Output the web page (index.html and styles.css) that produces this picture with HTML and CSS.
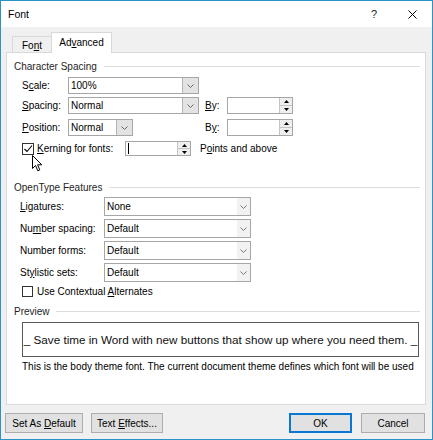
FILE: index.html
```html
<!DOCTYPE html>
<html>
<head>
<meta charset="utf-8">
<title>Font</title>
<link rel="stylesheet" href="styles.css">
</head>
<body>
<div class="win">
  <div class="titlebar">
    <span class="title">Font</span>
    <span class="help">?</span>
    <span class="close"><svg width="9" height="9" viewBox="0 0 9 9"><path d="M0.5 0.5L8.5 8.5M8.5 0.5L0.5 8.5" stroke="#000" stroke-width="1" fill="none"/></svg></span>
  </div>
  <div class="client">
    <div class="tabs">
      <div class="tab tab-font"><span>Fo<u>n</u>t</span></div>
      <div class="tab tab-active"><span>Ad<u>v</u>anced</span></div>
    </div>
    <div class="panel">
      <div class="ghead g-char"><span>Character Spacing</span><span class="rule"></span></div>

      <div class="row r-scale">
        <span class="lbl lw46">S<u>c</u>ale:</span>
        <div class="combo cw131"><span class="val">100%</span><span class="arr dark"><svg width="7" height="4" viewBox="0 0 7 4"><path d="M0.5 0.5L3.5 3.5L6.5 0.5" stroke="#666" fill="none"/></svg></span></div>
      </div>

      <div class="row r-spacing">
        <span class="lbl lw46"><u>S</u>pacing:</span>
        <div class="combo cw131"><span class="val">Normal</span><span class="arr dark"><svg width="7" height="4" viewBox="0 0 7 4"><path d="M0.5 0.5L3.5 3.5L6.5 0.5" stroke="#666" fill="none"/></svg></span></div>
        <span class="lbl by"><u>B</u>y:</span>
        <div class="spin sw66"><span class="field"></span><span class="btns"><span class="up"><svg width="5" height="3" viewBox="0 0 5 3"><path d="M0 3L2.5 0L5 3Z" fill="#000"/></svg></span><span class="dn"><svg width="5" height="3" viewBox="0 0 5 3"><path d="M0 0L2.5 3L5 0Z" fill="#000"/></svg></span></span></div>
      </div>

      <div class="row r-position">
        <span class="lbl lw46"><u>P</u>osition:</span>
        <div class="cell131"><div class="combo cw65"><span class="val">Normal</span><span class="arr dark"><svg width="7" height="4" viewBox="0 0 7 4"><path d="M0.5 0.5L3.5 3.5L6.5 0.5" stroke="#666" fill="none"/></svg></span></div></div>
        <span class="lbl by">B<u>y</u>:</span>
        <div class="spin sw66"><span class="field"></span><span class="btns"><span class="up"><svg width="5" height="3" viewBox="0 0 5 3"><path d="M0 3L2.5 0L5 3Z" fill="#000"/></svg></span><span class="dn"><svg width="5" height="3" viewBox="0 0 5 3"><path d="M0 0L2.5 3L5 0Z" fill="#000"/></svg></span></span></div>
      </div>

      <div class="row r-kern">
        <span class="chk"><svg width="10" height="10" viewBox="0 0 10 10"><path d="M1.5 5L4 7.5L9 1.5" stroke="#000" stroke-width="1.1" fill="none"/></svg></span>
        <span class="lbl kern-lbl"><u>K</u>erning for fonts:</span>
        <div class="spin sw66"><span class="field"><span class="caret"></span></span><span class="btns"><span class="up"><svg width="5" height="3" viewBox="0 0 5 3"><path d="M0 3L2.5 0L5 3Z" fill="#000"/></svg></span><span class="dn"><svg width="5" height="3" viewBox="0 0 5 3"><path d="M0 0L2.5 3L5 0Z" fill="#000"/></svg></span></span></div>
        <span class="lbl pts">P<u>o</u>ints and above</span>
      </div>

      <div class="ghead g-ot"><span>OpenType Features</span><span class="rule"></span></div>

      <div class="row orow o1">
        <span class="lbl lw84"><u>L</u>igatures:</span>
        <div class="combo cw147"><span class="val">None</span><span class="arr light"><svg width="7" height="4" viewBox="0 0 7 4"><path d="M0.5 0.5L3.5 3.5L6.5 0.5" stroke="#777" fill="none"/></svg></span></div>
      </div>
      <div class="row orow">
        <span class="lbl lw84">Nu<u>m</u>ber spacing:</span>
        <div class="combo cw147"><span class="val">Default</span><span class="arr light"><svg width="7" height="4" viewBox="0 0 7 4"><path d="M0.5 0.5L3.5 3.5L6.5 0.5" stroke="#777" fill="none"/></svg></span></div>
      </div>
      <div class="row orow">
        <span class="lbl lw84">Number forms:</span>
        <div class="combo cw147"><span class="val">Default</span><span class="arr light"><svg width="7" height="4" viewBox="0 0 7 4"><path d="M0.5 0.5L3.5 3.5L6.5 0.5" stroke="#777" fill="none"/></svg></span></div>
      </div>
      <div class="row orow">
        <span class="lbl lw84">St<u>y</u>listic sets:</span>
        <div class="combo cw147"><span class="val">Default</span><span class="arr light"><svg width="7" height="4" viewBox="0 0 7 4"><path d="M0.5 0.5L3.5 3.5L6.5 0.5" stroke="#777" fill="none"/></svg></span></div>
      </div>

      <div class="row r-ctx">
        <span class="chk small"></span>
        <span class="lbl">Use Contextual <u>A</u>lternates</span>
      </div>

      <div class="ghead g-prev"><span>Preview</span><span class="rule"></span></div>

      <div class="preview"><span>_ Save time in Word with new buttons that show up where you need them. _</span></div>
      <div class="desc">This is the body theme font. The current document theme defines which font will be used</div>

      <svg class="cursor" width="11" height="17" viewBox="0 0 11 17"><path d="M0.5 0.5L0.5 13.5L3.5 10.5L5.8 15.8L7.8 14.9L5.6 9.8L9.8 9.8Z" fill="#fff" stroke="#000" stroke-width="1" stroke-linejoin="miter"/></svg>
    </div>
    <div class="buttons">
      <div class="btn b-def"><span>Set As <u>D</u>efault</span></div>
      <div class="btn b-fx"><span>Text <u>E</u>ffects...</span></div>
      <div class="btn b-ok"><span>OK</span></div>
      <div class="btn b-cancel"><span>Cancel</span></div>
    </div>
  </div>
</div>
</body>
</html>
```

FILE: styles.css
```css
* { box-sizing: border-box; }
html, body { margin: 0; padding: 0; }
body {
  width: 433px;
  height: 440px;
  overflow: hidden;
  font-family: "Liberation Sans", Arial, sans-serif;
  font-size: 10px;
  color: #000;
  background: #fff;
}
u { text-decoration-thickness: 1px; text-underline-offset: 1px; }

.win {
  width: 433px;
  height: 440px;
  border: 1px solid #2b93c8;
  display: flex;
  flex-direction: column;
}

.titlebar {
  height: 26px;
  flex: none;
  display: flex;
  align-items: center;
  padding-left: 7px;
  background: #fff;
  font-size: 10.5px;
}
.title { flex: 1; }
.help { margin-right: 31px; font-size: 11px; color: #222; }
.close { display: flex; margin-right: 15px; }

.client {
  flex: 1;
  background: #f0f0f0;
  display: flex;
  flex-direction: column;
}

.tabs {
  display: flex;
  align-items: flex-end;
  height: 21px;
  margin-top: 5px;
  margin-bottom: -1px;
  padding-left: 11px;
}
.tab {
  display: flex;
  align-items: center;
  justify-content: center;
  border: 1px solid #d9d9d9;
  border-bottom: none;
}
.tab-font { width: 39px; height: 17px; background: #f0f0f0; border-right: none; }
.tab-active { width: 61px; height: 21px; background: #fff; position: relative; z-index: 1; padding-bottom: 2px; }

.panel {
  margin-left: 5px;
  width: 420px;
  height: 353px;
  background: #fff;
  border: 1px solid #d9d9d9;
  position: relative;
  display: flex;
  flex-direction: column;
}

.ghead {
  display: flex;
  align-items: center;
  height: 14px;
  padding-left: 7px;
  padding-right: 5px;
  color: #1e1e1e;
}
.ghead .rule { flex: 1; height: 1px; background: #dcdcdc; margin-left: 7px; }
.g-char { margin-top: 6px; }
.g-ot { margin-top: 24px; }
.g-prev { margin-top: 7px; }
.g-prev .rule { margin-left: 6px; }

.row { display: flex; align-items: center; padding-left: 15px; }
.r-scale { margin-top: 4px; height: 17px; }
.r-spacing { margin-top: 3px; height: 17px; }
.r-position { margin-top: 5px; height: 17px; }
.r-kern { margin-top: 5px; height: 15px; }

.lbl { white-space: nowrap; }
.lw46 { width: 46px; flex: none; }
.lw84 { width: 84px; flex: none; }
.by { width: 22px; margin-left: 6px; flex: none; }
.cell131 { width: 131px; height: 100%; flex: none; }
.kern-lbl { width: 88px; flex: none; }
.pts { margin-left: 9px; }

.combo {
  display: flex;
  height: 100%;
  border: 1px solid #a6a6a6;
  background: #fff;
  flex: none;
}
.cw131 { width: 131px; }
.cw65 { width: 65px; }
.cw147 { width: 147px; }
.combo .val { flex: 1; display: flex; align-items: center; padding-left: 2px; }
.combo .arr { display: flex; align-items: center; justify-content: center; }
.arr.dark { width: 16px; background: #e3e3e3; border-left: 1px solid #b4b4b4; }
.arr.light { width: 13px; background: #f2f2f2; }

.spin {
  display: flex;
  height: 100%;
  border: 1px solid #a6a6a6;
  background: #fff;
  flex: none;
}
.sw66 { width: 66px; }
.spin .field { flex: 1; display: flex; align-items: center; padding-left: 2px; }
.caret { width: 1px; height: 11px; background: #000; }
.spin .btns {
  width: 13px;
  display: flex;
  flex-direction: column;
  border-left: 1px solid #c4c4c4;
  background: #efefef;
}
.btns span { flex: 1; display: flex; align-items: center; justify-content: center; }
.btns .up { border-bottom: 1px solid #c4c4c4; }

.chk {
  width: 12px;
  height: 12px;
  border: 1px solid #333;
  background: #fff;
  display: flex;
  align-items: center;
  justify-content: center;
  margin-right: 3px;
  flex: none;
}
.chk.small { width: 11px; height: 11px; margin-right: 4px; }

.orow { padding-left: 13px; height: 19px; margin-top: 3px; }
.o1 { margin-top: 3px; }

.r-ctx { margin-top: 4px; height: 11px; }

.preview {
  margin-top: 4px;
  margin-left: 15px;
  width: 397px;
  height: 35px;
  border: 1px solid #5a5a5a;
  display: flex;
  align-items: center;
  justify-content: center;
  font-size: 11.7px;
  white-space: nowrap;
  overflow: hidden;
  color: #111;
}
.desc {
  margin-top: 3px;
  margin-left: 15px;
  width: 397px;
  height: 14px;
  line-height: 14px;
  white-space: nowrap;
  overflow: hidden;
}

.cursor { position: absolute; left: 25px; top: 102px; }

.buttons {
  display: flex;
  height: 20px;
  margin-top: 8px;
  padding-left: 4px;
  padding-right: 7px;
}
.btn {
  height: 20px;
  border: 1px solid #adadad;
  background: #e1e1e1;
  display: flex;
  align-items: center;
  justify-content: center;
  white-space: nowrap;
}
.b-def { width: 78px; }
.b-fx { width: 72px; margin-left: 8px; }
.b-ok { width: 63px; margin-left: auto; border: 2px solid #0a78d2; }
.b-cancel { width: 64px; margin-left: 9px; }
```
